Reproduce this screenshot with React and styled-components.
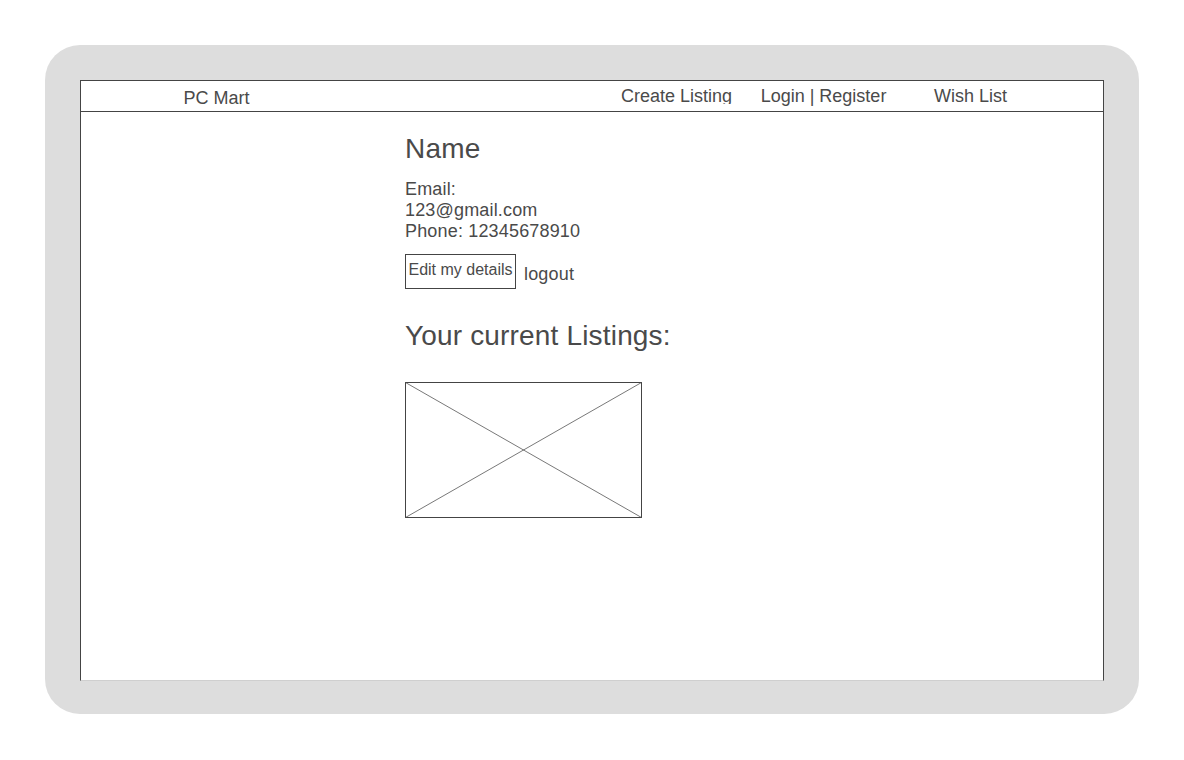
import React from 'react'
import styled, { createGlobalStyle } from 'styled-components'

const GlobalStyle = createGlobalStyle`
  html, body {
    margin: 0;
    padding: 0;
    background: #fff;
  }
  body {
    font-family: "Liberation Sans", Arial, sans-serif;
    color: #4a4a4a;
  }
`

const Device = styled.div`
  box-sizing: border-box;
  margin: 45px 0 0 45px;
  width: 1094px;
  padding: 35px 35px 33px;
  background: #dddddd;
  border-radius: 35px;
`

const Screen = styled.div`
  box-sizing: border-box;
  height: 601px;
  background: #fff;
  border: 1px solid #444;
  border-bottom: 1px solid #cfcfcf;
  display: flex;
  flex-direction: column;
`

const Header = styled.header`
  box-sizing: border-box;
  height: 31px;
  border-bottom: 1px solid #444;
  display: flex;
  justify-content: space-between;
  align-items: flex-start;
  padding: 0 59px 0 62px;
  font-size: 18px;
  line-height: 21px;
`

const Logo = styled.div`
  width: 147px;
  text-align: center;
  margin-top: 7px;
`

const Nav = styled.nav`
  display: flex;
  margin-top: 5px;
`

// the first link is cut off at the bottom in the mockup
const NavItem = styled.span`
  display: block;
  width: 147px;
  text-align: center;
  height: ${p => (p.$clipped ? '18px' : '21px')};
  overflow: hidden;
`

const Content = styled.main`
  padding: 21px 0 0 324px;
  display: flex;
  flex-direction: column;
  align-items: flex-start;
  letter-spacing: 0.17px;
`

const Name = styled.h1`
  margin: 0;
  font-size: 28px;
  font-weight: normal;
  line-height: 32px;
`

const Details = styled.div`
  margin-top: 14px;
  font-size: 18px;
  line-height: 21px;
`

const Actions = styled.div`
  display: flex;
  align-items: flex-start;
  gap: 8px;
  margin-top: 12px;
`

const EditButton = styled.button`
  box-sizing: border-box;
  width: 111px;
  height: 35px;
  margin: 0;
  padding: 6px 0 9px;
  border: 1px solid #444;
  background: #fff;
  color: #4a4a4a;
  font-family: inherit;
  font-size: 16px;
  line-height: 18px;
  letter-spacing: 0;
  white-space: nowrap;
  cursor: pointer;
`

const LogoutLink = styled.span`
  margin-top: 10px;
  font-size: 18px;
  line-height: 21px;
`

const SectionTitle = styled.h2`
  margin: 31px 0 0;
  font-size: 28px;
  font-weight: normal;
  line-height: 32px;
`

const Placeholder = styled.svg`
  display: block;
  margin-top: 30px;
`

function ImagePlaceholder({ width, height }) {
  return (
    <Placeholder width={width} height={height} viewBox={`0 0 ${width} ${height}`}>
      <rect x="0.5" y="0.5" width={width - 1} height={height - 1} fill="#fff" stroke="#444" />
      <line x1="0.5" y1="0.5" x2={width - 0.5} y2={height - 0.5} stroke="#555" strokeWidth="0.8" />
      <line x1={width - 0.5} y1="0.5" x2="0.5" y2={height - 0.5} stroke="#555" strokeWidth="0.8" />
    </Placeholder>
  )
}

export default function App() {
  return (
    <>
      <GlobalStyle />
      <Device>
        <Screen>
          <Header>
            <Logo>PC Mart</Logo>
            <Nav>
              <NavItem $clipped>Create Listing</NavItem>
              <NavItem>Login | Register</NavItem>
              <NavItem>Wish List</NavItem>
            </Nav>
          </Header>
          <Content>
            <Name>Name</Name>
            <Details>
              <div>Email:</div>
              <div>123@gmail.com</div>
              <div>Phone: 12345678910</div>
            </Details>
            <Actions>
              <EditButton>Edit my details</EditButton>
              <LogoutLink>logout</LogoutLink>
            </Actions>
            <SectionTitle>Your current Listings:</SectionTitle>
            <ImagePlaceholder width={237} height={136} />
          </Content>
        </Screen>
      </Device>
    </>
  )
}
